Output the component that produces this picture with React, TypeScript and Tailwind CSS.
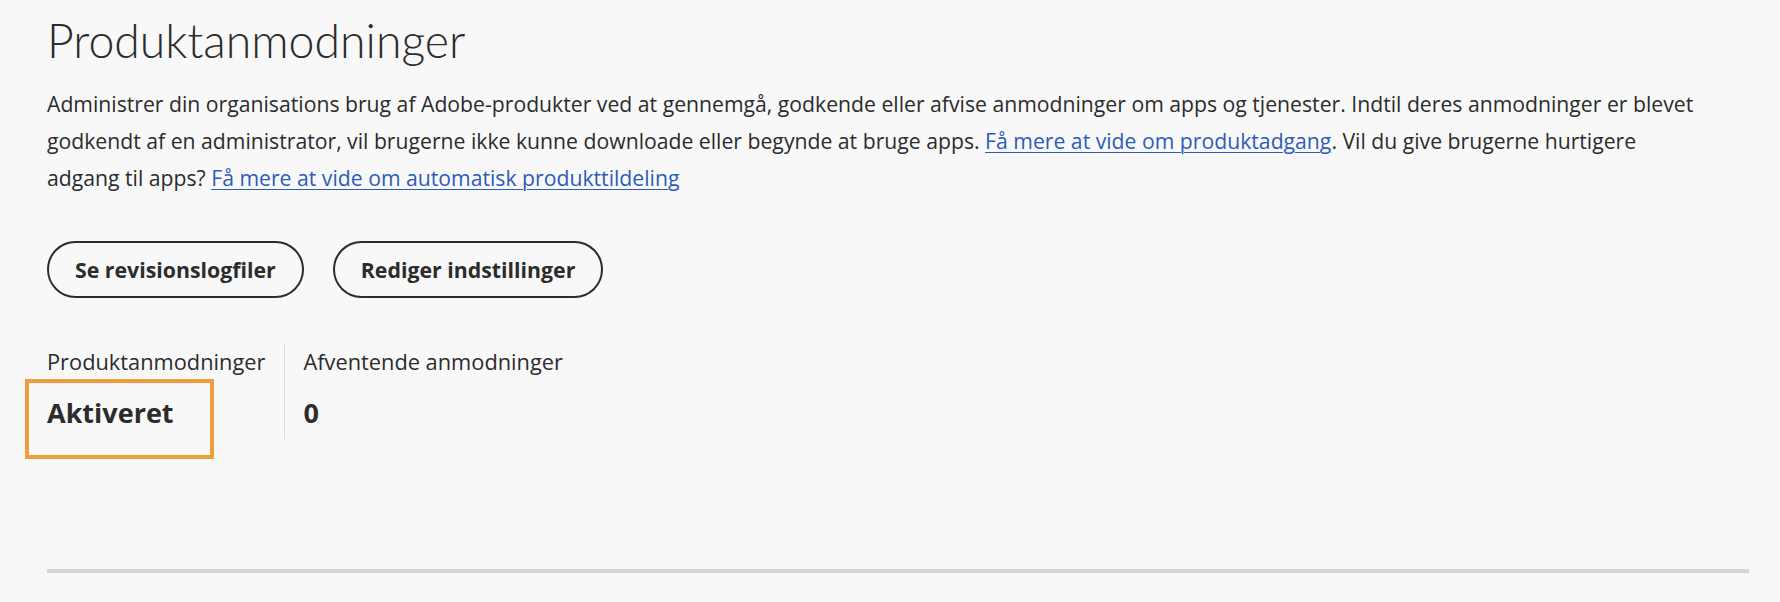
import React from "react";

export default function App() {
  return (
    <div className="min-h-[602px] w-full bg-[#f8f8f8] font-['Open_Sans',sans-serif] text-[#2c2c2c]">
      <div className="pl-[47px] pr-[31px] pt-[15px]">
        <h1 className="font-['Lato',sans-serif] text-[46.4px] font-light leading-[50px]">Produktanmodninger</h1>
        <p className="mt-[20px] whitespace-nowrap text-[21.2px] leading-[37px]">
          Administrer din organisations brug af Adobe-produkter ved at gennemgå, godkende eller afvise anmodninger om apps og tjenester. Indtil deres anmodninger er blevet
          <br />
          godkendt af en administrator, vil brugerne ikke kunne downloade eller begynde at bruge apps.{" "}
          <a href="#" className="text-[#2d5cb8] underline decoration-1 underline-offset-[3px]">
            Få mere at vide om produktadgang
          </a>
          . Vil du give brugerne hurtigere
          <br />
          adgang til apps?{" "}
          <a href="#" className="text-[#2d5cb8] underline decoration-1 underline-offset-[3px]">
            Få mere at vide om automatisk produkttildeling
          </a>
        </p>

        <div className="mt-[45px] flex gap-[29px]">
          <button className="flex h-[57px] items-center rounded-full border-[2.5px] border-[#2c2c2c] px-[26px] text-[21.3px] font-bold">
            Se revisionslogfiler
          </button>
          <button className="flex h-[57px] items-center rounded-full border-[2.5px] border-[#2c2c2c] px-[26px] text-[21.3px] font-bold">
            Rediger indstillinger
          </button>
        </div>

        <div className="mt-[45px] flex">
          <div className="relative pr-[19px] pt-[4px] pb-[8px]">
            <div className="text-[21.8px] leading-[30px]">Produktanmodninger</div>
            <div className="mt-[18px] text-[27px] font-bold leading-[36px]">Aktiveret</div>
            <div className="pointer-events-none absolute left-[-22px] top-[36px] h-[80px] w-[189px] border-[4px] border-[#f09d3d]" />
          </div>
          <div className="border-l border-[#dcdcdc] pl-[18px] pt-[4px] pb-[8px]">
            <div className="text-[21.8px] leading-[30px]">Afventende anmodninger</div>
            <div className="mt-[18px] text-[27px] font-bold leading-[36px]">0</div>
          </div>
        </div>

        <div className="mt-[130px] h-[4px] w-full bg-[#d6d6d6]" />
      </div>
    </div>
  );
}
